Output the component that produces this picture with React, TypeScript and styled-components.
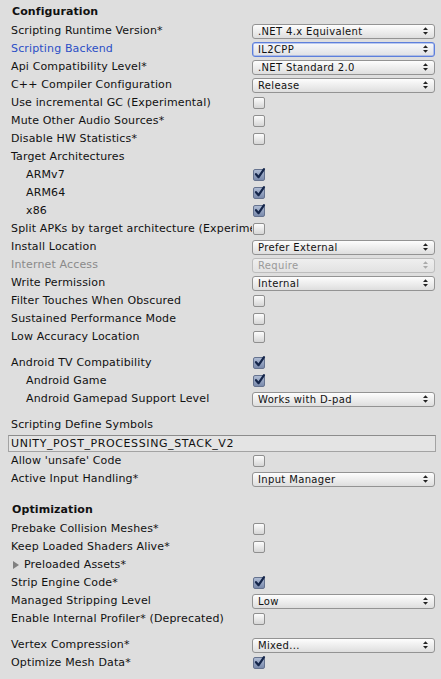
import React from 'react';
import styled, { createGlobalStyle, css } from 'styled-components';

const Global = createGlobalStyle`
  html, body { margin: 0; padding: 0; background: #dedede; }
  body {
    font-family: "DejaVu Sans", Verdana, sans-serif;
    font-size: 11px;
    color: #111;
  }
`;

const Panel = styled.div`
  width: 441px;
  box-sizing: border-box;
  padding: 4px 5px 8px 8px;
  display: flex;
  flex-direction: column;
`;

const Section = styled.section<{ $first?: boolean }>`
  display: flex;
  flex-direction: column;
  margin-top: ${(p) => (p.$first ? '0' : '14px')};
`;

const Header = styled.div`
  height: 18px;
  line-height: 16px;
  padding-left: 4px;
  font-weight: bold;
  letter-spacing: 0.1px;
`;

const Row = styled.div`
  display: grid;
  grid-template-columns: 244px 1fr;
  height: 18px;
  align-items: center;
`;

const Spacer = styled.div`
  height: 8px;
`;

type Tone = 'normal' | 'modified' | 'disabled';

const Label = styled.div<{ $tone?: Tone; $indent?: boolean }>`
  padding-left: ${(p) => (p.$indent ? '18px' : '3px')};
  white-space: nowrap;
  overflow: hidden;
  line-height: 18px;
  letter-spacing: 0.15px;
  display: flex;
  align-items: center;
  color: ${(p) =>
    p.$tone === 'modified' ? '#2b4ec6' : p.$tone === 'disabled' ? '#8a8a8a' : '#111'};
`;

const FullLabel = styled(Label)`
  overflow: visible;
`;

const Dropdown = styled.div<{ $focused?: boolean; $disabled?: boolean }>`
  height: 15px;
  box-sizing: border-box;
  border: 1px solid #939393;
  border-radius: 3px;
  background: linear-gradient(#fdfdfd, #dedede);
  display: flex;
  align-items: center;
  justify-content: space-between;
  padding: 0 6px 0 5px;
  font-size: 10px;
  letter-spacing: 0.35px;
  color: #111;
  margin-right: 1px;
  ${(p) =>
    p.$focused &&
    css`
      border-color: #5d7fdc;
      box-shadow: inset 0 0 0 0.5px #7d98e4;
      background: linear-gradient(#f8f9fc, #dfe0e4);
    `}
  ${(p) =>
    p.$disabled &&
    css`
      border-color: #bdbdbd;
      color: #9a9a9a;
      background: linear-gradient(#efefef, #e2e2e2);
    `}
`;

const Arrows = styled.svg<{ $disabled?: boolean }>`
  width: 5px;
  height: 8px;
  fill: ${(p) => (p.$disabled ? '#aaa' : '#222')};
  flex: none;
`;

const Box = styled.div<{ $checked?: boolean }>`
  width: 12px;
  height: 12px;
  box-sizing: border-box;
  margin-left: 1px;
  border: 1px solid #8f8f8f;
  border-radius: 2px;
  background: linear-gradient(#fcfcfc, #d6d6d6);
  display: flex;
  ${(p) =>
    p.$checked &&
    css`
      border-color: #66738f;
      background: linear-gradient(#aebbd3, #7a8aac);
    `}
`;

const Check = styled.svg`
  width: 12px;
  height: 12px;
  margin: -2px 0 0 -1px;
  overflow: visible;
`;

const TextField = styled.div`
  height: 17px;
  margin-top: 1px;
  box-sizing: border-box;
  border: 1px solid #a3a3a3;
  border-top-color: #8c8c8c;
  background: #e4e4e4;
  padding: 0 2px;
  line-height: 15px;
  letter-spacing: 0.6px;
  white-space: nowrap;
  overflow: hidden;
`;

const Foldout = styled.svg`
  width: 6px;
  height: 8px;
  fill: #808080;
  margin: 0 5px 0 2px;
  flex: none;
`;

const Select = ({ value, focused, disabled }: { value: string; focused?: boolean; disabled?: boolean }) => (
  <Dropdown $focused={focused} $disabled={disabled}>
    <span>{value}</span>
    <Arrows viewBox="0 0 5 8" $disabled={disabled}>
      <polygon points="0,3 2.5,0.3 5,3" />
      <polygon points="0,5 2.5,7.7 5,5" />
    </Arrows>
  </Dropdown>
);

const Toggle = ({ checked }: { checked?: boolean }) => (
  <Box $checked={checked}>
    {checked && (
      <Check viewBox="0 0 12 12">
        <path d="M3 6.2 L5.6 9.2 L11 1.2" fill="none" stroke="#14254a" strokeWidth="2.2" strokeLinecap="round" strokeLinejoin="round" />
      </Check>
    )}
  </Box>
);

type Item =
  | { kind: 'select'; label: string; value: string; tone?: Tone; indent?: boolean; focused?: boolean; disabled?: boolean }
  | { kind: 'check'; label: string; checked?: boolean; tone?: Tone; indent?: boolean }
  | { kind: 'label'; label: string; indent?: boolean }
  | { kind: 'fold'; label: string }
  | { kind: 'text'; value: string }
  | { kind: 'gap' };

const config: Item[] = [
  { kind: 'select', label: 'Scripting Runtime Version*', value: '.NET 4.x Equivalent' },
  { kind: 'select', label: 'Scripting Backend', value: 'IL2CPP', tone: 'modified', focused: true },
  { kind: 'select', label: 'Api Compatibility Level*', value: '.NET Standard 2.0' },
  { kind: 'select', label: 'C++ Compiler Configuration', value: 'Release' },
  { kind: 'check', label: 'Use incremental GC (Experimental)' },
  { kind: 'check', label: 'Mute Other Audio Sources*' },
  { kind: 'check', label: 'Disable HW Statistics*' },
  { kind: 'label', label: 'Target Architectures' },
  { kind: 'check', label: 'ARMv7', indent: true, checked: true },
  { kind: 'check', label: 'ARM64', indent: true, checked: true },
  { kind: 'check', label: 'x86', indent: true, checked: true },
  { kind: 'check', label: 'Split APKs by target architecture (Experimental)' },
  { kind: 'select', label: 'Install Location', value: 'Prefer External' },
  { kind: 'select', label: 'Internet Access', value: 'Require', tone: 'disabled', disabled: true },
  { kind: 'select', label: 'Write Permission', value: 'Internal' },
  { kind: 'check', label: 'Filter Touches When Obscured' },
  { kind: 'check', label: 'Sustained Performance Mode' },
  { kind: 'check', label: 'Low Accuracy Location' },
  { kind: 'gap' },
  { kind: 'check', label: 'Android TV Compatibility', checked: true },
  { kind: 'check', label: 'Android Game', indent: true, checked: true },
  { kind: 'select', label: 'Android Gamepad Support Level', value: 'Works with D-pad', indent: true },
  { kind: 'gap' },
  { kind: 'label', label: 'Scripting Define Symbols' },
  { kind: 'text', value: 'UNITY_POST_PROCESSING_STACK_V2' },
  { kind: 'check', label: "Allow 'unsafe' Code" },
  { kind: 'select', label: 'Active Input Handling*', value: 'Input Manager' },
];

const optimization: Item[] = [
  { kind: 'check', label: 'Prebake Collision Meshes*' },
  { kind: 'check', label: 'Keep Loaded Shaders Alive*' },
  { kind: 'fold', label: 'Preloaded Assets*' },
  { kind: 'check', label: 'Strip Engine Code*', checked: true },
  { kind: 'select', label: 'Managed Stripping Level', value: 'Low' },
  { kind: 'check', label: 'Enable Internal Profiler* (Deprecated)' },
  { kind: 'gap' },
  { kind: 'select', label: 'Vertex Compression*', value: 'Mixed...' },
  { kind: 'check', label: 'Optimize Mesh Data*', checked: true },
];

const renderItem = (item: Item, i: number) => {
  switch (item.kind) {
    case 'gap':
      return <Spacer key={i} />;
    case 'text':
      return <TextField key={i}>{item.value}</TextField>;
    case 'label':
      return (
        <Row key={i}>
          <FullLabel $indent={item.indent}>{item.label}</FullLabel>
        </Row>
      );
    case 'fold':
      return (
        <Row key={i}>
          <Label>
            <Foldout viewBox="0 0 6 8">
              <polygon points="0,0 6,4 0,8" />
            </Foldout>
            {item.label}
          </Label>
        </Row>
      );
    case 'check':
      return (
        <Row key={i}>
          <Label $tone={item.tone} $indent={item.indent}>{item.label}</Label>
          <Toggle checked={item.checked} />
        </Row>
      );
    case 'select':
      return (
        <Row key={i}>
          <Label $tone={item.tone} $indent={item.indent}>{item.label}</Label>
          <Select value={item.value} focused={item.focused} disabled={item.disabled} />
        </Row>
      );
  }
};

export default function App() {
  return (
    <>
      <Global />
      <Panel>
        <Section $first>
          <Header>Configuration</Header>
          {config.map(renderItem)}
        </Section>
        <Section>
          <Header>Optimization</Header>
          {optimization.map(renderItem)}
        </Section>
      </Panel>
    </>
  );
}
